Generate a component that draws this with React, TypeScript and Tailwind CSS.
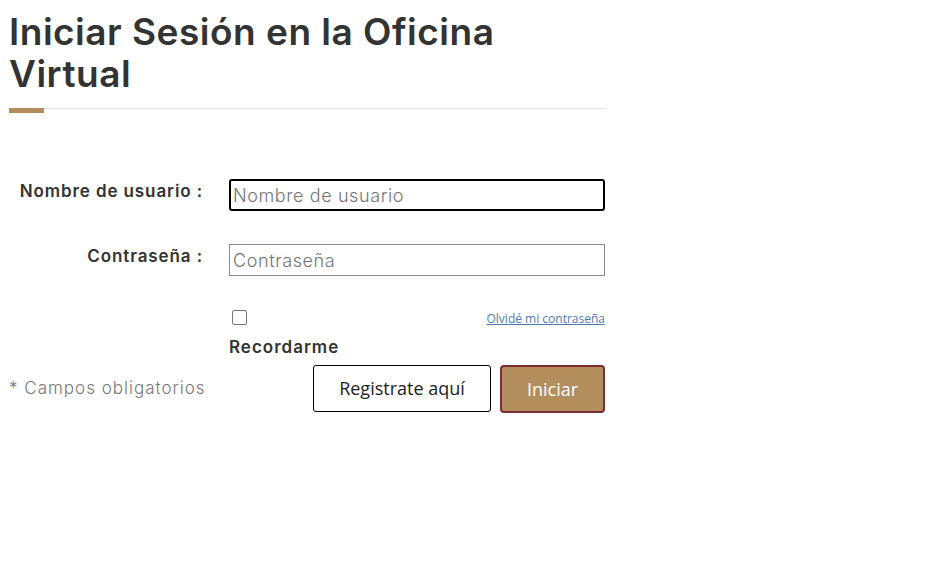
import { useState } from "react";

const mont = "font-['Inter','Noto_Sans',sans-serif]";
const open = "font-['Open_Sans','Noto_Sans',sans-serif]";

export default function App() {
  const [user, setUser] = useState("");
  const [pass, setPass] = useState("");
  const [remember, setRemember] = useState(false);

  return (
    <div className="min-h-[582px] w-[943px] bg-white">
      <div className="w-[596px] ml-[9px] pt-[11px]">
        <h1
          className={`${mont} text-[37px] leading-[42px] font-semibold text-[#333333] tracking-[0.5px]`}
        >
          Iniciar Sesión en la Oficina
          <br />
          Virtual
        </h1>
        <div className="mt-[13px] border-t border-[#e3e3e3]">
          <div className="-mt-px h-[5px] w-[35px] bg-[#b38e5d]" />
        </div>

        <form
          className="mt-[66px] grid grid-cols-[204px_1fr] gap-x-[16px]"
          onSubmit={(e) => e.preventDefault()}
        >
          <label
            htmlFor="usuario"
            className={`${mont} pr-[10px] pt-0 text-right text-[17px] tracking-[0.9px] font-semibold text-[#333333]`}
          >
            Nombre de usuario :
          </label>
          <input
            id="usuario"
            autoFocus
            value={user}
            onChange={(e) => setUser(e.target.value)}
            placeholder="Nombre de usuario"
            className={`${mont} h-[32px] w-full rounded-[3px] border-2 border-black px-[2px] text-[18px] tracking-[0.6px] font-light text-[#333] placeholder:text-[#757575] outline-none`}
          />

          <label
            htmlFor="contrasena"
            className={`${mont} mt-[33px] pr-[10px] pt-0 text-right text-[17px] tracking-[0.9px] font-semibold text-[#333333]`}
          >
            Contraseña :
          </label>
          <input
            id="contrasena"
            type="password"
            value={pass}
            onChange={(e) => setPass(e.target.value)}
            placeholder="Contraseña"
            className={`${mont} mt-[33px] h-[32px] w-full border border-[#8a8a8a] px-[3px] text-[18px] tracking-[0.6px] font-light text-[#333] placeholder:text-[#757575] outline-none`}
          />

          <div />
          <div className="mt-[34px]">
            <div className="flex items-start justify-between">
              <input
                type="checkbox"
                checked={remember}
                onChange={(e) => setRemember(e.target.checked)}
                className="ml-[3px] h-[15px] w-[15px] appearance-none rounded-[2px] border border-[#767676] bg-white"
              />
              <a
                href="#"
                className={`${open} mt-[1px] text-[12px] leading-[16px] text-[#4d7ab8] underline`}
              >
                Olvidé mi contraseña
              </a>
            </div>
            <div
              className={`${mont} mt-[8px] text-[17px] leading-[24px] tracking-[1px] font-semibold text-[#333333]`}
            >
              Recordarme
            </div>
          </div>
        </form>

        <div className="mt-[6px] flex items-center">
          <span
            className={`${mont} text-[17px] tracking-[1px] font-light text-[#777777]`}
          >
            * Campos obligatorios
          </span>
          <div className="ml-auto flex gap-[9px]">
            <button
              type="button"
              className={`${open} h-[47px] w-[178px] rounded-[3px] border border-black bg-white text-[18px] text-[#222]`}
            >
              Registrate aquí
            </button>
            <button
              type="submit"
              className={`${open} h-[48px] w-[105px] rounded-[4px] border-2 border-[#7d2c35] bg-[#b38e5d] text-[18px] text-white`}
            >
              Iniciar
            </button>
          </div>
        </div>
      </div>
    </div>
  );
}
